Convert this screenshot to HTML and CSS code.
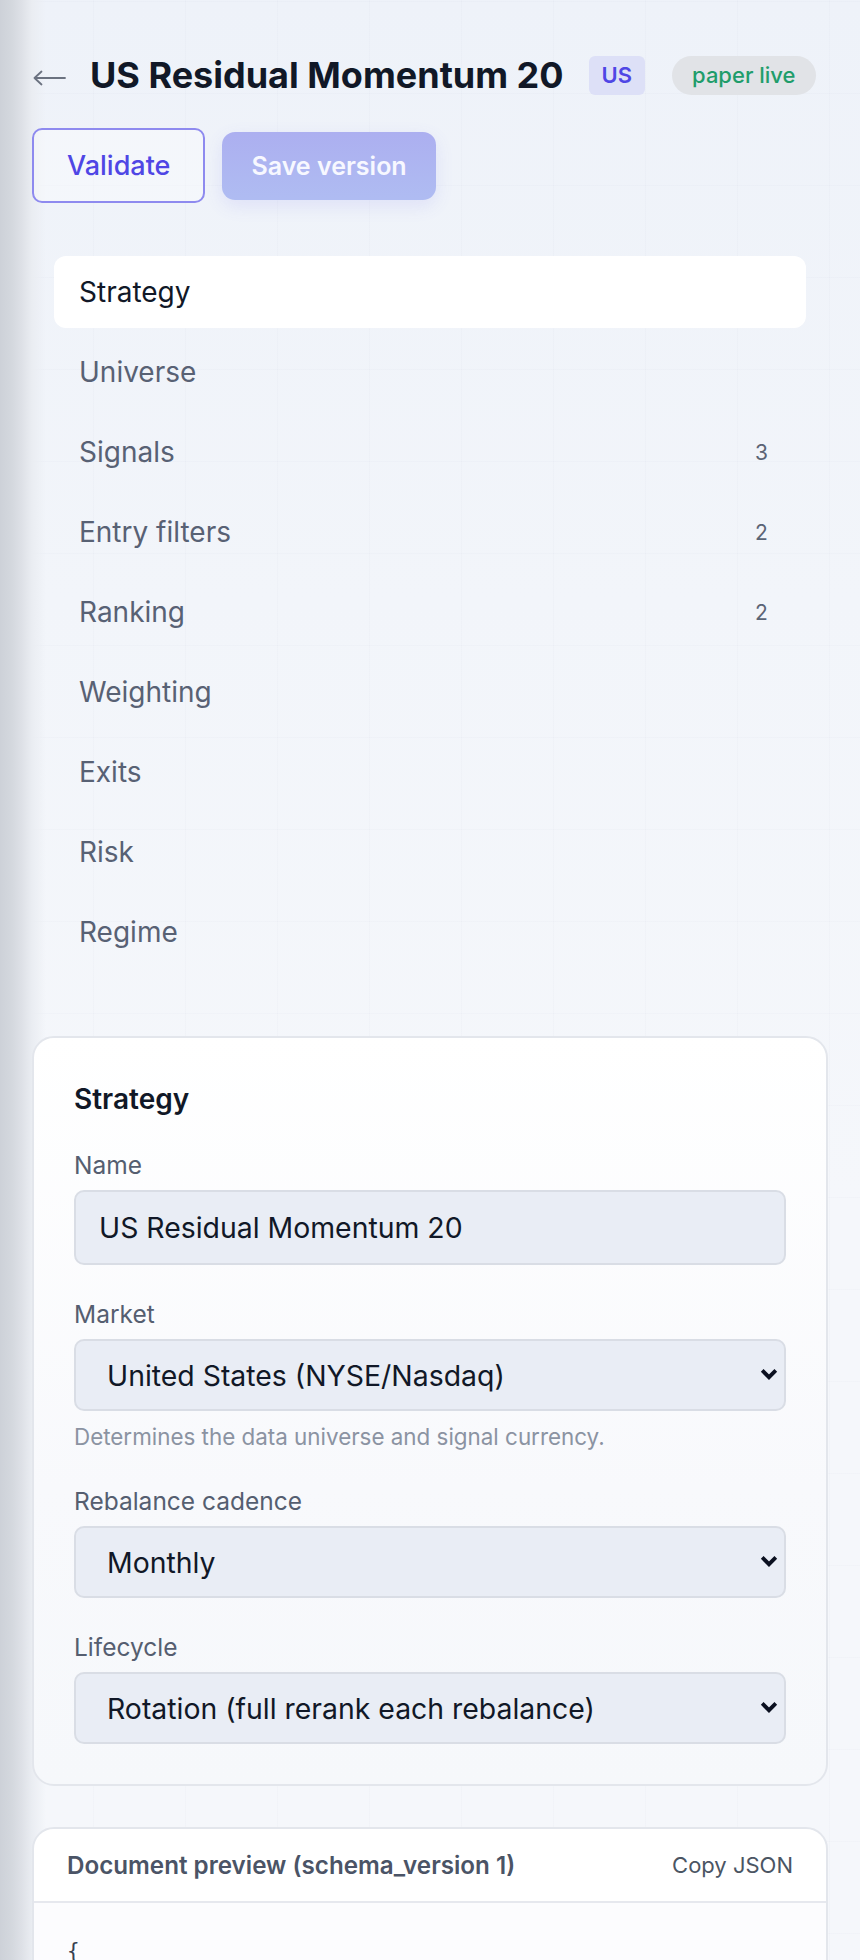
FILE: index.html
```html
<!DOCTYPE html>
<html lang="en">
<head>
<meta charset="utf-8">
<title>US Residual Momentum 20 — Strategy editor</title>
<link rel="stylesheet" href="styles.css">
</head>
<body>
<main class="page">
  <header class="top">
    <a class="back" href="#" aria-label="Back">
      <svg width="33" height="16" viewBox="0 0 33 16" aria-hidden="true">
        <path d="M1.5 8 H32 M8.5 1.5 L1.5 8 L8.5 14.5" fill="none" stroke="#6b7280" stroke-width="1.8" stroke-linecap="round" stroke-linejoin="round"/>
      </svg>
    </a>
    <h1 class="title">US Residual Momentum 20</h1>
    <span class="badge badge-market">US</span>
    <span class="badge badge-status">paper live</span>
  </header>

  <div class="actions">
    <button class="btn btn-outline" type="button">Validate</button>
    <button class="btn btn-primary" type="button" disabled>Save version</button>
  </div>

  <nav class="sections">
    <a class="section active" href="#">Strategy</a>
    <a class="section" href="#">Universe</a>
    <a class="section" href="#">Signals <span class="count">3</span></a>
    <a class="section" href="#">Entry filters <span class="count">2</span></a>
    <a class="section" href="#">Ranking <span class="count">2</span></a>
    <a class="section" href="#">Weighting</a>
    <a class="section" href="#">Exits</a>
    <a class="section" href="#">Risk</a>
    <a class="section" href="#">Regime</a>
  </nav>

  <section class="card">
    <h2 class="card-title">Strategy</h2>
    <div class="field">
      <label class="label" for="f-name">Name</label>
      <input class="control input" id="f-name" type="text" value="US Residual Momentum 20">
    </div>
    <div class="field">
      <label class="label" for="f-market">Market</label>
      <div class="select-wrap">
        <select class="control select" id="f-market">
          <option>United States (NYSE/Nasdaq)</option>
        </select>
        <svg class="chev" width="18" height="12" viewBox="0 0 18 12" aria-hidden="true"><path d="M2.2 2.4 L9 9.2 L15.8 2.4" fill="none" stroke="#0b1020" stroke-width="3.8"/></svg>
      </div>
      <p class="help">Determines the data universe and signal currency.</p>
    </div>
    <div class="field">
      <label class="label" for="f-cadence">Rebalance cadence</label>
      <div class="select-wrap">
        <select class="control select" id="f-cadence">
          <option>Monthly</option>
        </select>
        <svg class="chev" width="18" height="12" viewBox="0 0 18 12" aria-hidden="true"><path d="M2.2 2.4 L9 9.2 L15.8 2.4" fill="none" stroke="#0b1020" stroke-width="3.8"/></svg>
      </div>
    </div>
    <div class="field">
      <label class="label" for="f-life">Lifecycle</label>
      <div class="select-wrap">
        <select class="control select" id="f-life">
          <option>Rotation (full rerank each rebalance)</option>
        </select>
        <svg class="chev" width="18" height="12" viewBox="0 0 18 12" aria-hidden="true"><path d="M2.2 2.4 L9 9.2 L15.8 2.4" fill="none" stroke="#0b1020" stroke-width="3.8"/></svg>
      </div>
    </div>
  </section>

  <section class="doc">
    <div class="doc-head">
      <span class="doc-title">Document preview (schema_version 1)</span>
      <button class="doc-copy" type="button">Copy JSON</button>
    </div>
    <pre class="doc-body">{
  "schema_version": 1,
  "name": "US Residual Momentum 20",
  "market": "US",
  "rebalance": "monthly",
  "lifecycle": "rotation"
}</pre>
  </section>
</main>
</body>
</html>
```

FILE: styles.css
```css
* { box-sizing: border-box; }

html {
  min-height: 100%;
  background:
    linear-gradient(to right, #cdd1d8 0, #d4d8de 12px, #dee1e7 22px, #eaedf2 32px, rgba(240, 243, 249, 0) 46px) left top / 46px 100% no-repeat,
    linear-gradient(to right, rgba(40, 50, 90, 0.014) 1px, transparent 1px) 1px 1px / 92px 92px,
    linear-gradient(to bottom, rgba(40, 50, 90, 0.014) 1px, transparent 1px) 1px 1px / 92px 92px,
    linear-gradient(180deg, #eef2f9 0, #f2f5fa 600px, #f5f7fb 1200px, #f5f7fb 100%);
}

body {
  margin: 0;
  font-family: "Inter", "Noto Sans", "Liberation Sans", sans-serif;
  color: #111827;
}

.page {
  padding: 53px 32px 0;
}

/* header */
.top {
  display: flex;
  align-items: center;
  height: 44px;
  gap: 25px;
}
.back {
  display: flex;
  align-items: center;
  margin-left: 1px;
  margin-top: 6px;
  text-decoration: none;
}
.title {
  margin: 0 0 0 -1px;
  font-size: 36px;
  line-height: 44px;
  font-weight: 700;
  letter-spacing: 0;
  color: #111827;
  white-space: nowrap;
}
.badge {
  display: inline-flex;
  align-items: center;
  height: 39px;
  font-size: 22px;
  white-space: nowrap;
}
.badge-market {
  padding: 0 13px;
  border-radius: 6px;
  background: #dde0f7;
  color: #4f46e5;
  font-weight: 600;
}
.badge-status {
  margin-left: 2px;
  padding: 0 20px;
  border-radius: 20px;
  background: #e1e3e7;
  color: #1f9d6b;
  font-weight: 500;
}

/* actions */
.actions {
  display: flex;
  align-items: center;
  gap: 17px;
  margin-top: 31px;
}
.btn {
  font-family: inherit;
  cursor: pointer;
  white-space: nowrap;
}
.btn-outline {
  height: 75px;
  padding: 0 33px;
  border: 2px solid #8e8aef;
  border-radius: 10px;
  background: rgba(255, 255, 255, 0.35);
  color: #4f46e5;
  font-size: 27px;
  font-weight: 500;
}
.btn-primary {
  height: 68px;
  padding: 0 29px;
  border: 0;
  border-radius: 13px;
  background: linear-gradient(180deg, #acaff0 0%, #afbcf2 100%);
  color: #f7f8ff;
  font-size: 25px;
  font-weight: 600;
  box-shadow: 0 6px 18px rgba(99, 102, 241, 0.12);
}

/* sections nav */
.sections {
  display: flex;
  flex-direction: column;
  gap: 8px;
  margin: 53px 22px 0;
}
.section {
  display: flex;
  align-items: center;
  justify-content: space-between;
  height: 72px;
  padding: 0 28px 0 25px;
  border-radius: 12px;
  font-size: 28px;
  color: #586174;
  text-decoration: none;
}
.section.active {
  background: #ffffff;
  color: #111827;
}
.count {
  min-width: 33px;
  text-align: center;
  font-size: 21px;
  color: #5b6475;
}

/* form card */
.card {
  margin-top: 68px;
  padding: 40px;
  border: 2px solid #e3e6ec;
  border-radius: 22px;
  background: linear-gradient(180deg, #ffffff 0%, #f8f9fc 60%, #f6f8fb 100%);
}
.card-title {
  margin: 0 0 27px;
  font-size: 28px;
  line-height: 42px;
  font-weight: 600;
  color: #111827;
}
.field + .field {
  margin-top: 31px;
}
.label {
  display: block;
  margin-bottom: 6px;
  font-size: 24.5px;
  line-height: 37px;
  color: #555e70;
}
.control {
  display: block;
  width: 100%;
  border: 2px solid #d9dde5;
  border-radius: 10px;
  background: #e9edf5;
  font-family: inherit;
  font-size: 28.4px;
  color: #111827;
  outline: none;
}
.input {
  height: 75px;
  padding: 0 23px;
}
.select-wrap {
  position: relative;
}
.select {
  height: 72px;
  padding: 0 60px 0 31px;
  appearance: none;
  -webkit-appearance: none;
}
.chev {
  position: absolute;
  right: 8px;
  top: 29px;
  pointer-events: none;
}
.help {
  margin: 10px 0 0;
  font-size: 22.4px;
  line-height: 31px;
  color: #8b93a2;
}

/* document preview */
.doc {
  margin-top: 41px;
  border: 2px solid #e3e6ec;
  border-radius: 22px;
  background: #ffffff;
  overflow: hidden;
}
.doc-head {
  display: flex;
  align-items: center;
  justify-content: space-between;
  height: 74px;
  padding: 0 33px;
  border-bottom: 2px solid #e6e8ee;
}
.doc-title {
  font-size: 24.2px;
  font-weight: 600;
  color: #4b5466;
}
.doc-copy {
  padding: 0;
  border: 0;
  background: none;
  font-family: inherit;
  font-size: 22px;
  color: #4b5563;
  cursor: pointer;
}
.doc-body {
  margin: 0;
  padding: 32px 33px;
  background: #fcfcfe;
  font-family: "DejaVu Sans Mono", "Liberation Mono", monospace;
  font-size: 21px;
  line-height: 32px;
  color: #374151;
}
```
